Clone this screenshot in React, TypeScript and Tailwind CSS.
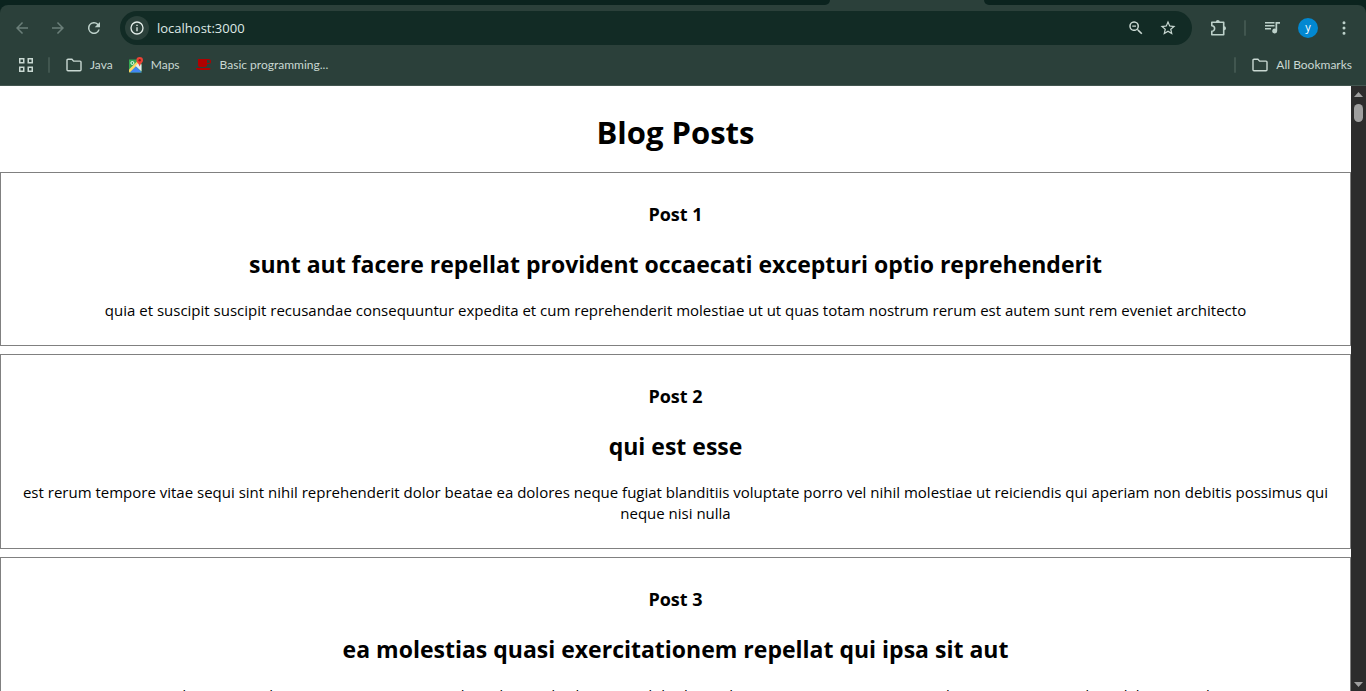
import type { ReactNode } from "react";

type Post = { id: number; title: string; body: string };

const posts: Post[] = [
  {
    id: 1,
    title: "sunt aut facere repellat provident occaecati excepturi optio reprehenderit",
    body: "quia et suscipit suscipit recusandae consequuntur expedita et cum reprehenderit molestiae ut ut quas totam nostrum rerum est autem sunt rem eveniet architecto",
  },
  {
    id: 2,
    title: "qui est esse",
    body: "est rerum tempore vitae sequi sint nihil reprehenderit dolor beatae ea dolores neque fugiat blanditiis voluptate porro vel nihil molestiae ut reiciendis qui aperiam non debitis possimus qui neque nisi nulla",
  },
  {
    id: 3,
    title: "ea molestias quasi exercitationem repellat qui ipsa sit aut",
    body: "et iusto sed quo iure voluptatem occaecati omnis eligendi aut ad voluptatem doloribus vel accusantium quis pariatur molestiae porro eius odio et labore et velit aut",
  },
];

function Icon({ d, className = "size-[18px]" }: { d: string; className?: string }) {
  return (
    <svg viewBox="0 0 24 24" className={className} fill="currentColor" aria-hidden="true">
      <path d={d} />
    </svg>
  );
}

function FolderIcon() {
  return (
    <svg viewBox="0 0 16 14" className="h-[14px] w-4" fill="none" stroke="currentColor" strokeWidth="1.4" aria-hidden="true">
      <path d="M1 11.7V2.2c0-.6.4-1 1-1h3.9l1.7 1.9H14c.6 0 1 .4 1 1v7.6c0 .6-.4 1-1 1H2c-.6 0-1-.4-1-1Z" />
    </svg>
  );
}

function MapsIcon() {
  return (
    <svg viewBox="1 0 14 16" className="h-4 w-3.5" aria-hidden="true">
      <path d="M1 2.500h12.500V15.500H2a1 1 0 0 1-1-1Z" fill="#34a853" />
      <path d="M1 12.500 9.500 4l2 2L2 15.500a1 1 0 0 1-1-1Z" fill="#fdd663" />
      <path d="m7.500 9 3.500-3.500 2.500 2v7Z" fill="#e8eaed" />
      <path d="M1.800 15.500 7.800 9.500 13.500 15v.5Z" fill="#4285f4" />
      <circle cx="4.400" cy="6" r="1.500" fill="none" stroke="#fff" strokeWidth=".9" />
      <path d="M11.700 0a3.300 3.300 0 0 0-3.300 3.300c0 2.300 2.400 3 3.300 6.400.9-3.400 3.300-4.100 3.300-6.400A3.300 3.300 0 0 0 11.700 0Z" fill="#ea4335" />
      <circle cx="11.700" cy="3.300" r="1.200" fill="#8c1d18" />
    </svg>
  );
}

function CupIcon() {
  return (
    <svg viewBox="0 0 16 14" className="h-[14px] w-4" aria-hidden="true">
      <path
        fillRule="evenodd"
        fill="#b00000"
        d="M2 1h10.500a2.500 2.500 0 0 1 0 5H11v1a2 2 0 0 1-2 2H4a2 2 0 0 1-2-2ZM11 2v3h1.500a1.500 1.500 0 0 0 0-3Z"
      />
      <path fill="#b00000" d="M0 10h14.500c0 1-.7 2-1.700 2H1.700C.7 12 0 11 0 10Z" />
    </svg>
  );
}

function IconButton({ label, className = "", children }: { label: string; className?: string; children: ReactNode }) {
  return (
    <button type="button" aria-label={label} className={`flex size-7 shrink-0 items-center justify-center rounded-full ${className}`}>
      {children}
    </button>
  );
}

function Bookmark({ label, icon }: { label: string; icon: ReactNode }) {
  return (
    <a href="#" className="flex items-center gap-2 whitespace-nowrap">
      {icon}
      <span>{label}</span>
    </a>
  );
}

function BrowserBar() {
  return (
    <header className="shrink-0 bg-[#0b231e] text-[#bdd1ca]">
      <div className="flex h-[5px] justify-between bg-[#2b403a]">
        <div className="w-[830px] rounded-br-[10px] bg-[#0b231e]" />
        <div className="w-[382px] rounded-bl-[10px] bg-[#0b231e]" />
      </div>
      <div className="rounded-t-lg border-b border-[#435650] bg-[#2b403a]">
        <div className="flex h-[46px] items-center px-2">
          <IconButton label="Back" className="text-[#6b7f79]">
            <Icon d="M20 11H7.800l5.600-5.600L12 4l-8 8 8 8 1.400-1.400L7.800 13H20Z" />
          </IconButton>
          <IconButton label="Forward" className="ml-2 text-[#6b7f79]">
            <Icon d="m12 4-1.400 1.400 5.600 5.600H4v2h12.200l-5.600 5.600L12 20l8-8Z" />
          </IconButton>
          <IconButton label="Reload" className="ml-2">
            <Icon d="M17.650 6.350A8 8 0 1 0 19.730 14h-2.080A6 6 0 1 1 12 6c1.660 0 3.140.690 4.220 1.780L13 11h7V4Z" />
          </IconButton>
          <div className="ml-3 flex h-[34px] grow items-center rounded-full bg-[#122b25] pr-2.5 pl-[5px]">
            <button type="button" aria-label="Site information" className="flex size-6 items-center justify-center rounded-full bg-[#2b403a] text-[#e3ece8]">
              <Icon className="size-4" d="M11 7h2v2h-2Zm0 4h2v6h-2Zm1-9a10 10 0 1 0 0 20 10 10 0 0 0 0-20Zm0 18a8 8 0 1 1 0-16 8 8 0 0 1 0 16Z" />
            </button>
            <input
              aria-label="Address"
              defaultValue="localhost:3000"
              className="ml-2 min-w-0 grow bg-transparent pt-0.5 text-[13px] text-[#dfe9e5] outline-none"
            />
            <IconButton label="Zoom" className="text-[#c9d8d2]">
              <Icon d="M15.500 14h-.79l-.28-.27A6.500 6.500 0 1 0 13.730 14.430l.27.28v.79l5 4.990L20.490 19Zm-6 0a4.500 4.500 0 1 1 0-9 4.500 4.500 0 0 1 0 9ZM7 8.800h5v1.400H7Z" />
            </IconButton>
            <IconButton label="Bookmark this tab" className="ml-1 text-[#c9d8d2]">
              <Icon d="m22 9.240-7.190-.62L12 2 9.190 8.630 2 9.240l5.460 4.730L5.820 21 12 17.270 18.180 21l-1.630-7.030ZM12 15.400l-3.760 2.270 1-4.280-3.320-2.880 4.380-.38L12 6.100l1.710 4.040 4.380.38-3.320 2.880 1 4.280Z" />
            </IconButton>
          </div>
          <IconButton label="Extensions" className="ml-3">
            <svg viewBox="0 0 18 18" className="size-[18px]" fill="none" stroke="currentColor" strokeWidth="1.600" strokeLinejoin="round" aria-hidden="true">
              <path d="M2.800 3.300H14.700V15.700H2.800V12.300a2.800 2.800 0 0 0 0-5.600Z" />
              <path d="M6.800 3a2 2 0 0 1 4 0ZM15 7.300a2 2 0 0 1 0 4Z" fill="currentColor" stroke="none" />
            </svg>
          </IconButton>
          <div className="mx-3 h-4 w-0.5 rounded bg-[#41564f]" />
          <IconButton label="Media controls">
            <svg viewBox="0 0 18 18" className="size-[18px]" fill="currentColor" aria-hidden="true">
              <path d="M2 3h9.500v1.500H2ZM2 6h9.500v1.500H2ZM2 9h6v1.500H2ZM12.500 3H17v1.700H14.200V12a2.500 2.500 0 1 1-1.700-2.350Z" />
            </svg>
          </IconButton>
          <button type="button" aria-label="Profile" className="ml-3 flex size-5 items-center justify-center rounded-full bg-[#0288d1] pb-[3px] text-[11px] leading-none text-white">
            y
          </button>
          <IconButton label="Menu" className="ml-3">
            <Icon d="M12 7a2 2 0 1 0 0-4 2 2 0 0 0 0 4Zm0 3a2 2 0 1 0 0 4 2 2 0 0 0 0-4Zm0 7a2 2 0 1 0 0 4 2 2 0 0 0 0-4Z" />
          </IconButton>
        </div>
        <nav aria-label="Bookmarks" className="flex h-[34px] items-center gap-4 pr-3.5 pb-1.5 pl-[18px] font-[Lato,sans-serif] text-xs text-[#c9d8d2]">
          <button type="button" aria-label="Apps" className="flex size-4 items-center justify-center">
            <svg viewBox="0 0 16 16" className="size-4" fill="none" stroke="currentColor" strokeWidth="1.500" aria-hidden="true">
              <path d="M1.750 1.750h4v4h-4ZM10.250 1.750h4v4h-4ZM1.750 10.250h4v4h-4ZM10.250 10.250h4v4h-4Z" />
            </svg>
          </button>
          <div className="-ml-0.5 h-4 w-0.5 rounded bg-[#41564f]" />
          <Bookmark label="Java" icon={<FolderIcon />} />
          <Bookmark label="Maps" icon={<MapsIcon />} />
          <Bookmark label="Basic programming..." icon={<CupIcon />} />
          <div className="ml-auto h-4 w-0.5 rounded bg-[#41564f]" />
          <Bookmark label="All Bookmarks" icon={<FolderIcon />} />
        </nav>
      </div>
    </header>
  );
}

function PostCard({ post }: { post: Post }) {
  return (
    <article className="border border-[#808080] px-2.5 pt-[29px] pb-6">
      <h3 className="text-lg leading-[25px] font-bold">Post {post.id}</h3>
      <h2 className="mt-[21px] text-[23px] leading-8 font-bold">{post.title}</h2>
      <p className="mt-5 text-[15px] leading-[21px]">{post.body}</p>
    </article>
  );
}

function Scrollbar() {
  return (
    <div aria-hidden="true" className="flex w-[15px] shrink-0 flex-col items-center bg-[#2c2c2c] pt-1.5 pb-1 text-[#9f9f9f]">
      <svg viewBox="0 0 9 5" className="h-[5px] w-[9px]" fill="currentColor">
        <path d="M0 5 4.500 0 9 5Z" />
      </svg>
      <div className="mt-[7px] h-[18px] w-[9px] rounded-full bg-[#9f9f9f]" />
      <svg viewBox="0 0 9 5" className="mt-auto h-[5px] w-[9px]" fill="currentColor">
        <path d="M0 0h9L4.500 5Z" />
      </svg>
    </div>
  );
}

export default function App() {
  return (
    <div className="flex h-screen flex-col overflow-hidden bg-white font-['Open_Sans',sans-serif] text-black">
      <BrowserBar />
      <div className="flex min-h-0 grow">
        <main className="min-w-0 grow overflow-hidden text-center">
          <h1 className="pt-6 pb-[18px] text-[31px] leading-[44px] font-bold">Blog Posts</h1>
          <div className="flex flex-col gap-2">
            {posts.map((post) => (
              <PostCard key={post.id} post={post} />
            ))}
          </div>
        </main>
        <Scrollbar />
      </div>
    </div>
  );
}
